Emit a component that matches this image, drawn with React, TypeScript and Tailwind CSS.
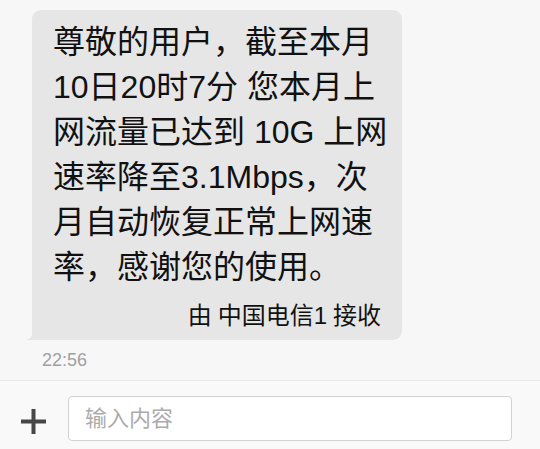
import React from "react";

const lines = [
  "尊敬的用户，截至本月",
  "10日20时7分 您本月上",
  "网流量已达到 10G 上网",
  "速率降至3.1Mbps，次",
  "月自动恢复正常上网速",
  "率，感谢您的使用。",
];

export default function App() {
  return (
    <div
      className="w-[540px] h-[449px] bg-[#f7f7f7] flex flex-col overflow-hidden"
      style={{ fontFamily: '"Liberation Sans", "Noto Sans CJK SC", sans-serif' }}
    >
      <div className="flex-1 pt-[10px] pl-[32px]">
        <div className="relative w-[370px] bg-[#e6e6e6] rounded-[9px] pl-[21px] pr-[21px] pt-[10px] pb-[9px]">
          <div className="text-[32px] leading-[45px] text-[#111111]">
            {lines.map((l, i) => (
              <div key={i} className="whitespace-nowrap">
                {l}
              </div>
            ))}
          </div>
          <div className="mt-[11px] flex justify-end text-[24px] leading-[30px] text-[#111111] whitespace-nowrap">
            <span>由</span>
            <span className="ml-[6px]">中国电信1</span>
            <span className="ml-[6px]">接收</span>
          </div>
          <svg
            className="absolute left-[-6px] bottom-0"
            width="14"
            height="10"
            viewBox="0 0 14 10"
          >
            <path d="M6 0 L6 4 C6 7 4 9 0 10 L14 10 L14 0 Z" fill="#e6e6e6" />
          </svg>
        </div>
        <div className="mt-[10px] ml-[10px] text-[18px] leading-[20px] text-[#a0a0a0]">
          22:56
        </div>
      </div>
      <div className="h-[69px] border-t border-[#e8e8e8] bg-[#f9f9f9] flex items-start pt-[15px]">
        <div className="w-[68px] flex justify-center pt-[12px] pr-[2px]">
          <svg width="27" height="27" viewBox="0 0 27 27">
            <path d="M13.5 1 V26 M1 13.5 H26" stroke="#474747" strokeWidth="4" />
          </svg>
        </div>
        <div className="w-[444px] h-[45px] bg-white border border-[#d2d2d2] rounded-[4px] flex items-center pl-[16px] text-[22px] text-[#ababab]">
          输入内容
        </div>
      </div>
    </div>
  );
}
